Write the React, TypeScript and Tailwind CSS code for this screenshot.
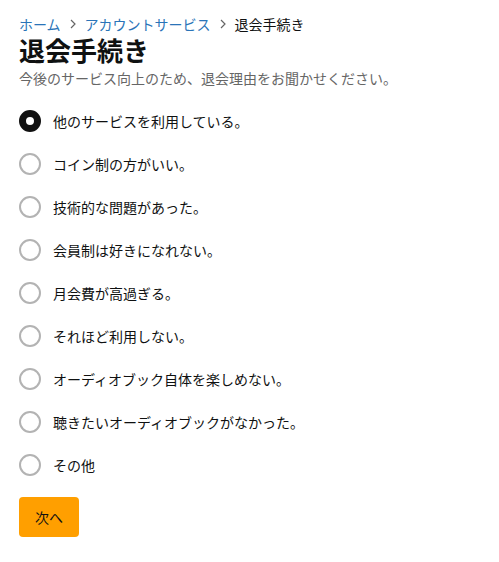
import React, { useState } from "react";

const reasons = [
  "他のサービスを利用している。",
  "コイン制の方がいい。",
  "技術的な問題があった。",
  "会員制は好きになれない。",
  "月会費が高過ぎる。",
  "それほど利用しない。",
  "オーディオブック自体を楽しめない。",
  "聴きたいオーディオブックがなかった。",
  "その他",
];

function Chevron() {
  return (
    <svg width="8" height="10" viewBox="0 0 8 10" className="mx-[8px]">
      <path d="M2 1 L6 5 L2 9" fill="none" stroke="#666" strokeWidth="1.2" />
    </svg>
  );
}

export default function App() {
  const [sel, setSel] = useState(0);
  return (
    <div
      className="bg-white text-[#0f1111] px-[19px] pt-[14px]"
      style={{ fontFamily: '"Noto Sans CJK JP", "Noto Sans", sans-serif' }}
    >
      <div className="flex items-center text-[14px] leading-[20px]">
        <span className="text-[#2a74b8]">ホーム</span>
        <Chevron />
        <span className="text-[#2a74b8]">アカウントサービス</span>
        <Chevron />
        <span className="text-[#0f1111]">退会手続き</span>
      </div>
      <h1 className="text-[26px] font-bold leading-[32px]">退会手続き</h1>
      <p className="text-[14px] leading-[20px] text-[#666] mt-[2px]">
        今後のサービス向上のため、退会理由をお聞かせください。
      </p>
      <div className="flex flex-col mt-[11px]">
        {reasons.map((r, i) => (
          <label
            key={i}
            className="flex items-center h-[43px] cursor-pointer"
            onClick={() => setSel(i)}
          >
            {sel === i ? (
              <span className="w-[22px] h-[22px] rounded-full border-[7px] border-[#111] bg-white box-border" />
            ) : (
              <span className="w-[22px] h-[22px] rounded-full border-[2px] border-[#b3b3b3] bg-white box-border" />
            )}
            <span className="ml-[12px] text-[14px] leading-[20px]">{r}</span>
          </label>
        ))}
      </div>
      <button className="mt-[11px] w-[60px] h-[40px] rounded-[4px] bg-[#ff9f00] text-[14px] text-[#0f1111]">
        次へ
      </button>
    </div>
  );
}
